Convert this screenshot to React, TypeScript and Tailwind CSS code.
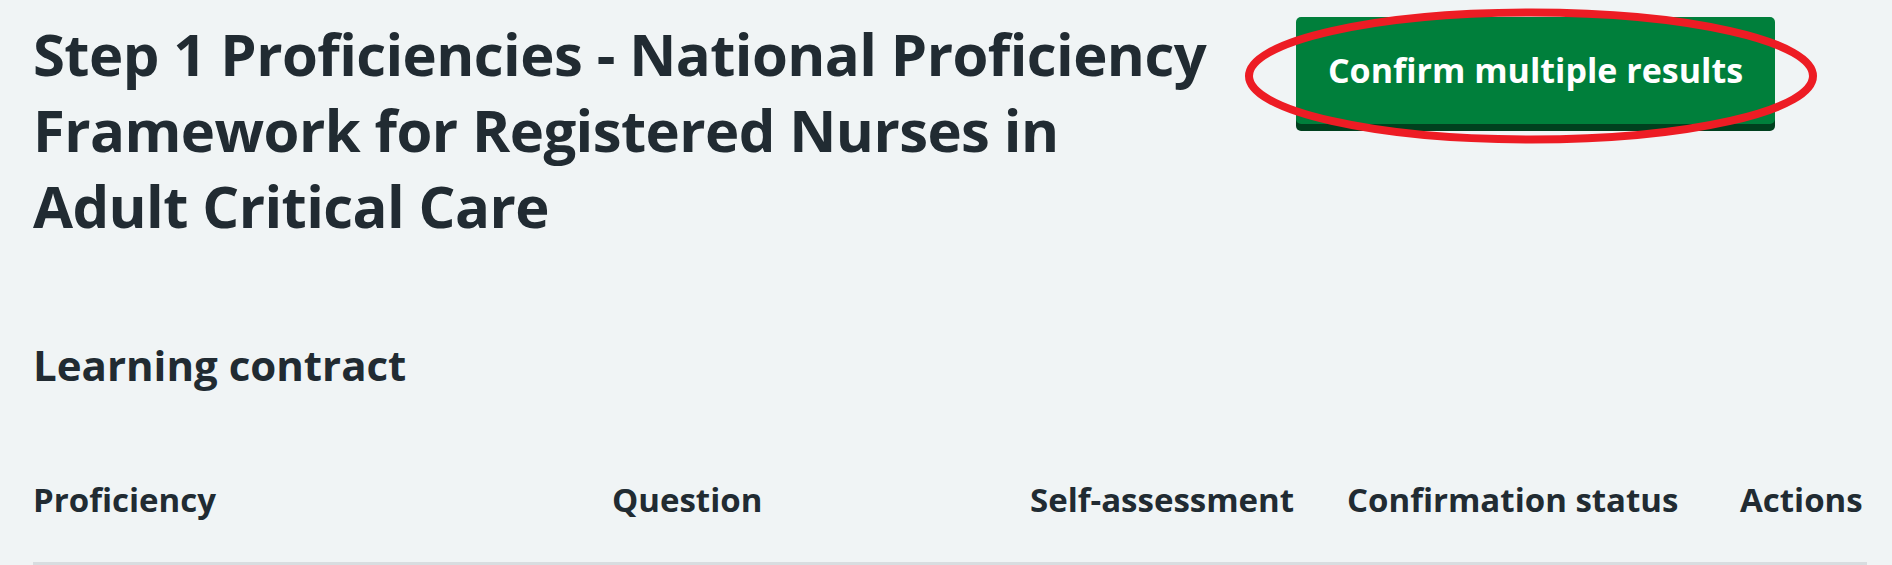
export default function App() {
    const columns = [
        { label: 'Proficiency', width: 'w-[579px]' },
        { label: 'Question', width: 'w-[418px]' },
        { label: 'Self-assessment', width: 'w-[317px]' },
        { label: 'Confirmation status', width: 'w-[393px]' },
        { label: 'Actions', width: 'w-[127px]' },
    ];

    return (
        <div className="relative min-h-screen bg-[#f0f4f5] text-[#212b32] font-['Open_Sans',sans-serif] px-[33px] overflow-hidden">
            <div className="flex items-start">
                <h1 className="w-[1185px] shrink-0 pt-[16px] text-[58px] leading-[76px] font-bold tracking-[-0.01em]">
                    Step 1 Proficiencies - National Proficiency Framework for Registered Nurses in Adult Critical Care
                </h1>
                <div className="ml-[78px] mt-[17px]">
                    <button className="w-[479px] h-[107px] rounded-[5px] bg-[#007f3b] shadow-[0_7px_0_#00401e] text-white text-[34px] font-bold">
                        Confirm multiple results
                    </button>
                </div>
            </div>

            <h2 className="mt-[93px] text-[42px] leading-[56px] font-bold">Learning contract</h2>

            {/* Table header */}
            <div className="mt-[85px] flex w-[1834px] border-b-[3px] border-[#d8dde0] pb-[40px]">
                {columns.map((col) => (
                    <div key={col.label} className={`${col.width} shrink-0 text-[33px] leading-[44px] font-bold`}>
                        {col.label}
                    </div>
                ))}
            </div>

            {/* Annotation ring */}
            <svg className="absolute left-[1240px] top-[4px]" width="582" height="144" viewBox="0 0 582 144">
                <ellipse cx="291" cy="72" rx="282" ry="63.5" fill="none" stroke="#ed1c24" strokeWidth="8" />
            </svg>
        </div>
    );
}
